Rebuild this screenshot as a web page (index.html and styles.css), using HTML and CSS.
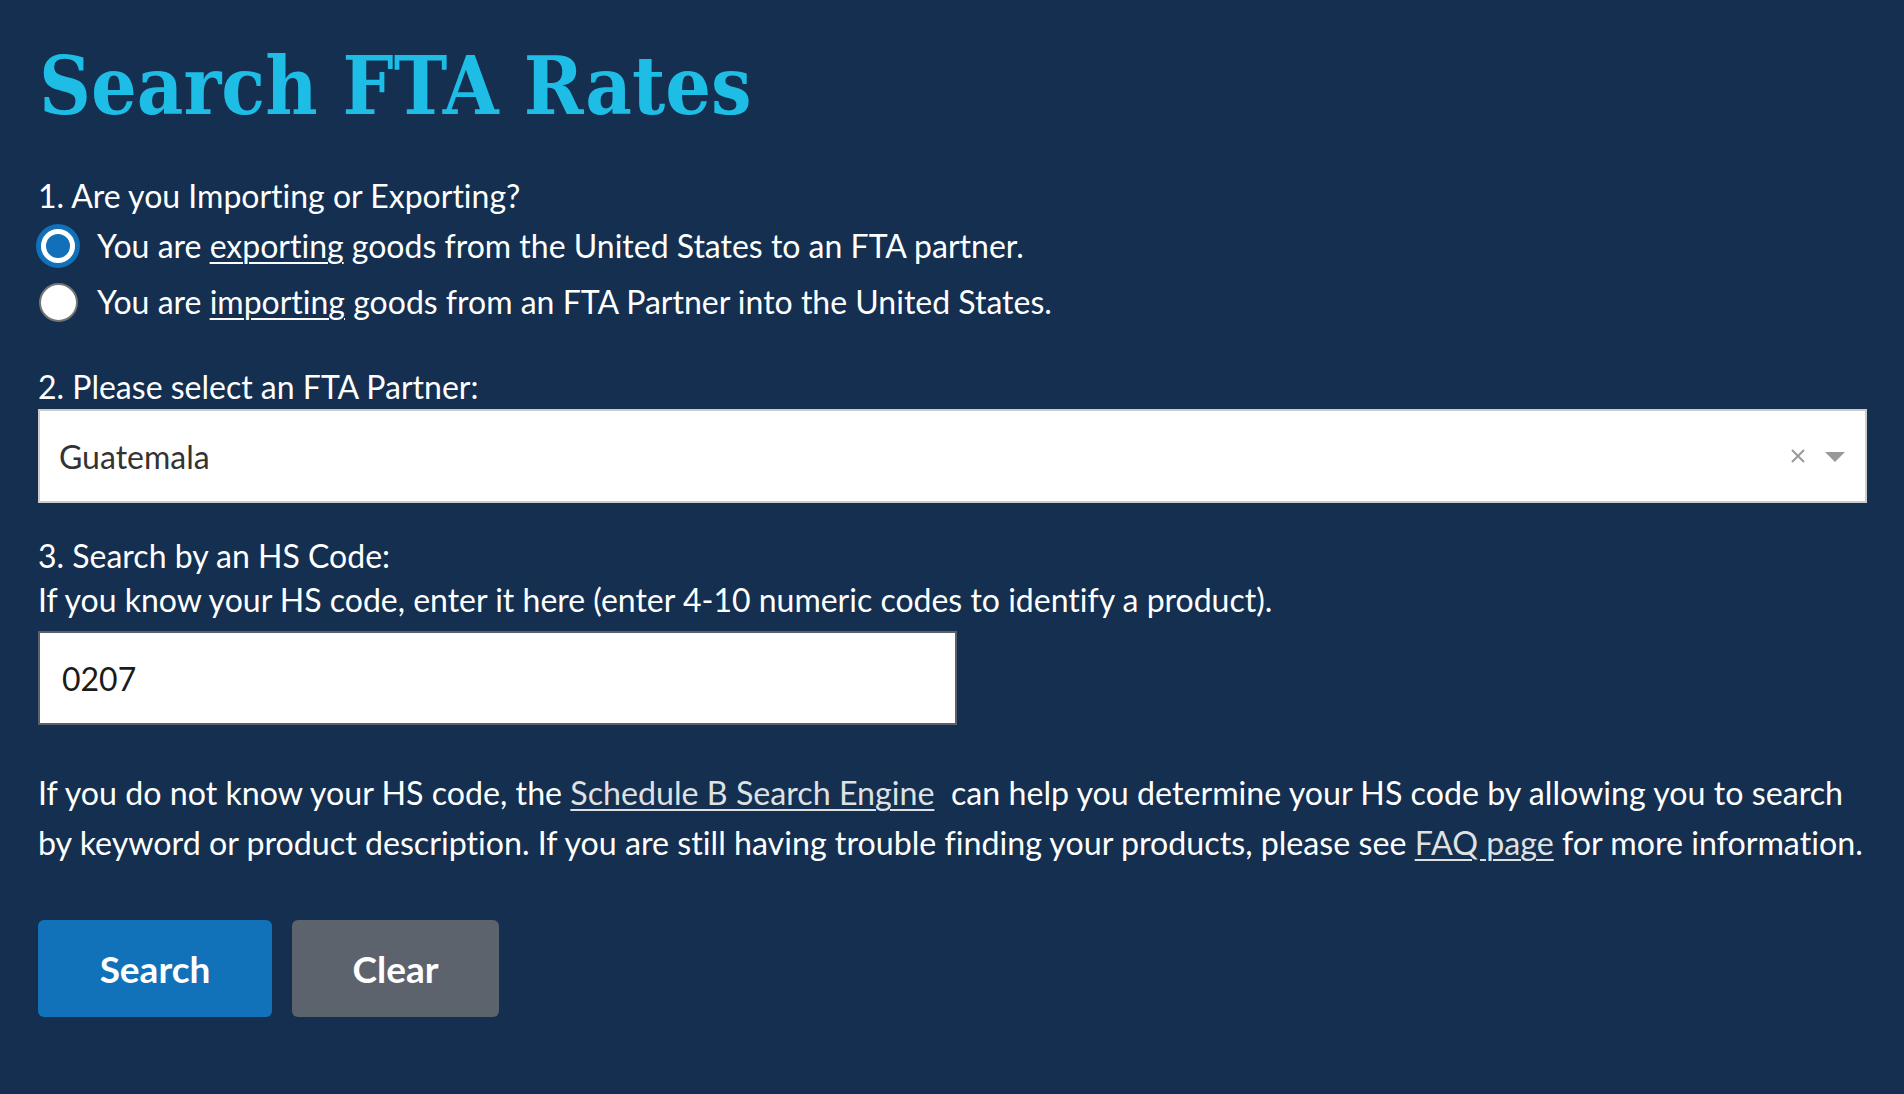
FILE: index.html
```html
<!DOCTYPE html>
<html lang="en">
<head>
    <meta charset="UTF-8">
    <meta name="viewport" content="width=device-width, initial-scale=1.0">
    <title>Search FTA Rates</title>
    <link rel="stylesheet" href="styles.css">
</head>
<body>
    <main class="fta-search">
        <h1>Search FTA Rates</h1>

        <form class="search-form" onsubmit="return false;">
            <div class="field-label first">1. Are you Importing or Exporting?</div>
            <label class="radio-row">
                <span class="radio-box"><input type="radio" name="direction" value="export" checked></span>
                <span class="radio-text">You are <u>exporting</u> goods from the United States to an FTA partner.</span>
            </label>
            <label class="radio-row">
                <span class="radio-box"><input type="radio" name="direction" value="import"></span>
                <span class="radio-text">You are <u>importing</u> goods from an FTA Partner into the United States.</span>
            </label>

            <div class="field-label partner">2. Please select an FTA Partner:</div>
            <div class="select-box">
                <span class="select-value">Guatemala</span>
                <span class="select-clear">
                    <svg width="14" height="14" viewBox="0 0 14 14"><path d="M1 1 L13 13 M13 1 L1 13" stroke="#999" stroke-width="2"/></svg>
                </span>
                <span class="select-arrow">
                    <svg width="20" height="10" viewBox="0 0 20 10"><path d="M0 0 H20 L10 10 Z" fill="#999"/></svg>
                </span>
            </div>

            <div class="field-label hs">3. Search by an HS Code:</div>
            <div class="field-label">If you know your HS code, enter it here (enter 4-10 numeric codes to identify a product).</div>
            <input class="hs-input" type="text" value="0207">

            <p class="help-text">If you do not know your HS code, the <a href="#">Schedule B Search Engine</a>&nbsp; can help you determine your HS code by allowing you to search<br>by keyword or product description. If you are still having trouble finding your products, please see <a href="#">FAQ page</a> for more information.</p>

            <div class="actions">
                <button class="btn btn-search" type="submit">Search</button>
                <button class="btn btn-clear" type="reset">Clear</button>
            </div>
        </form>
    </main>
</body>
</html>
```

FILE: styles.css
```css
body {
    margin: 0;
    background-color: #142f50;
    color: #fff;
    font-family: Lato, "Noto Sans", sans-serif;
    font-size: 32px;
    font-variant-ligatures: no-common-ligatures;
}

.fta-search {
    padding: 46px 37px 40px 38px;
}

h1 {
    margin: 0;
    font-family: "DejaVu Serif Condensed", "DejaVu Serif", serif;
    font-weight: bold;
    font-size: 80px;
    line-height: 80px;
    color: #1ebde5;
    padding-left: 1px;
}

.search-form {
    display: flex;
    flex-direction: column;
}

.field-label {
    line-height: 44px;
}

.field-label.first {
    margin-top: 48px;
}

.field-label.partner {
    margin-top: 35px;
}

.field-label.hs {
    margin-top: 31px;
}

.radio-row {
    display: flex;
    align-items: center;
    height: 56px;
    cursor: pointer;
}

.radio-box {
    width: 40px;
    height: 44px;
    display: flex;
    align-items: center;
    justify-content: center;
}

.radio-box input {
    appearance: none;
    -webkit-appearance: none;
    margin: 0;
    width: 39px;
    height: 39px;
    border-radius: 50%;
    background-color: #fff;
    border: 2px solid #757575;
    box-sizing: border-box;
    cursor: pointer;
}

.radio-box input:checked {
    width: 34px;
    height: 34px;
    background-color: #1170b9;
    border: 5px solid #fff;
    box-shadow: 0 0 0 5px #1170b9;
}

.radio-text {
    margin-left: 19px;
    line-height: 44px;
}

.radio-text u {
    text-underline-offset: 4px;
    text-decoration-thickness: 2px;
}

.select-box {
    margin-top: 0;
    height: 94px;
    box-sizing: border-box;
    border: 2px solid #cccccc;
    background-color: #fff;
    display: flex;
    align-items: center;
    padding: 0 20px 0 19px;
}

.select-value {
    flex: 1;
    color: #333;
}

.select-clear {
    display: flex;
    margin-right: 20px;
}

.select-arrow {
    display: flex;
    margin-top: 2px;
}

.hs-input {
    margin-top: 9px;
    width: 919px;
    height: 94px;
    box-sizing: border-box;
    border: 2px solid #5b616b;
    border-radius: 0;
    padding: 0 22px;
    font-family: inherit;
    font-size: 32px;
    color: #1b1b1b;
    background: #fff;
    outline: none;
}

.help-text {
    margin: 43px 0 0;
    font-size: 32.2px;
    line-height: 50px;
    white-space: nowrap;
}

.help-text a {
    color: #dfe1e2;
    text-underline-offset: 4px;
    text-decoration-thickness: 2px;
}

.actions {
    margin-top: 52px;
    display: flex;
    gap: 20px;
}

.btn {
    height: 97px;
    border: none;
    border-radius: 6px;
    color: #fff;
    font-family: Lato, "Noto Sans", sans-serif;
    font-weight: bold;
    font-size: 37px;
    cursor: pointer;
    padding: 0;
}

.btn-search {
    width: 234px;
    background-color: #1172ba;
}

.btn-clear {
    width: 207px;
    background-color: #5c636d;
}
```
